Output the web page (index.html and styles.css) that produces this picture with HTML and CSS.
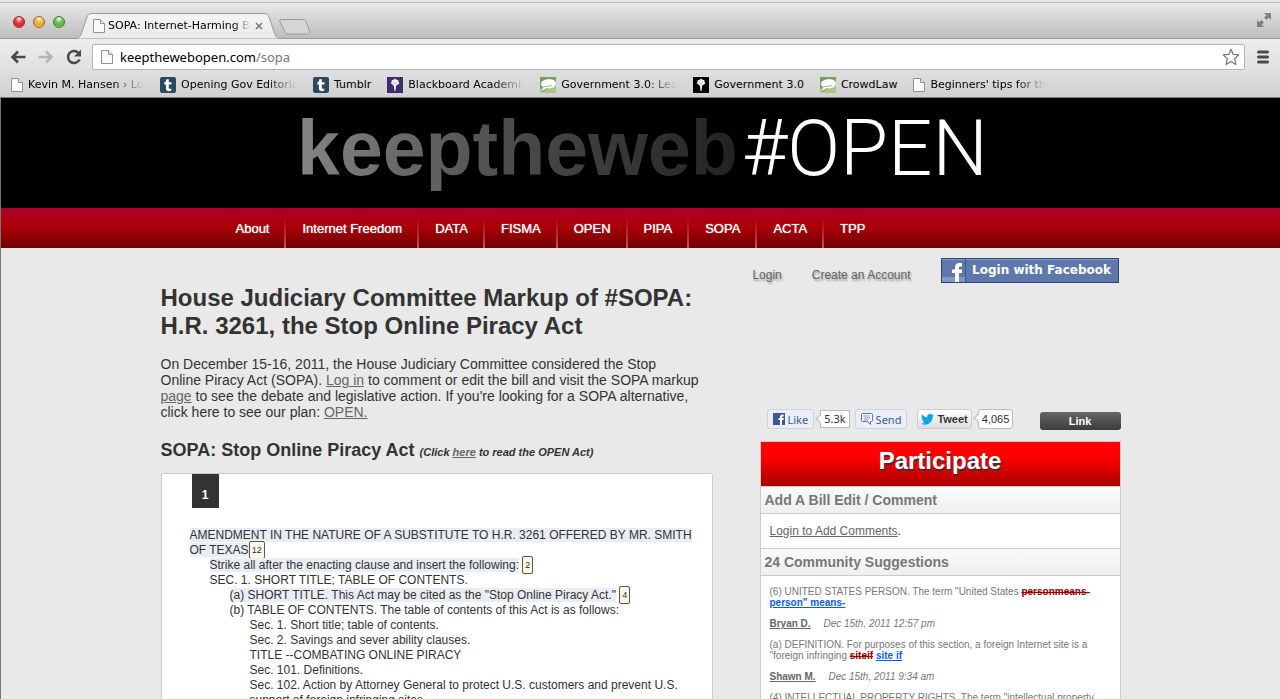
FILE: index.html
```html
<!DOCTYPE html>
<html lang="en">
    <head>
        <meta charset="utf-8">
        <title>SOPA: Internet-Harming Bill</title>
        <link rel="stylesheet" href="styles.css">
    </head>
    <body>
        <svg class="defs" aria-hidden="true">
            <linearGradient id="tab-fill" x1="0" y1="0" x2="0" y2="1">
                <stop offset="0" stop-color="#f4f4f4"/>
                <stop offset="1" stop-color="#ebebeb"/>
            </linearGradient>
            <symbol id="page" viewBox="0 0 12 14">
                <path d="M.5.5h7l4 4v9H.5z" fill="#fafafa" stroke="#929292"/>
                <path d="M7.500.5v4h4" fill="#e6e6e6" stroke="#929292"/>
            </symbol>
            <symbol id="tumblr" viewBox="0 0 16 16">
                <rect width="16" height="16" rx="2" fill="#2c4762"/>
                <path d="M6.300 2.300h2.500v2.900h2.700v2.300H8.800v3.300c0 1.400 1.300 1.200 2.500.6v2.200c-2.500 1.200-5.400.6-5.400-2V7.500H4.300V5.600c1.300-.5 1.900-1.500 2-3.300z" fill="#fff"/>
            </symbol>
            <symbol id="torch" viewBox="0 0 16 16">
                <path d="M6.900 8h2.200l-.6 6h-1z" fill="#fff"/>
                <path d="M8 1.500l1.500 1.200 1.800.2.300 1.900.8 1.600-1.500 1.200-1.300 1L8 8l-1.800.5-1-1.300-1.500-1 .9-1.500.2-1.800 1.800-.2z" fill="#eee"/>
                <path d="M6 5l2 2 2-2" stroke="#999" stroke-width=".6" fill="none"/>
            </symbol>
            <symbol id="crowd" viewBox="0 0 16 16">
                <rect width="16" height="16" fill="#7ba05b"/>
                <path d="M0 12l16-3v7H0z" fill="#a9c98c"/>
                <path d="M9 2.200c4 0 7 1.500 7 4.300s-3 4.800-7 4.800c-1 0-2-.1-3-.4-1 1.600-3 2.600-5 2.500 1.300-.8 1.900-1.900 2-3.300C1.800 9.300 1 8 1 6.800 1 4 5 2.200 9 2.200z" fill="#fff"/>
                <path d="M1.500 13.500c3 .5 5-1 5.500-2M3 10c3-.8 6-1 9-1.200" stroke="#6d924f" stroke-width=".7" fill="none"/>
            </symbol>
        </svg>

        <div class="browser">
            <div class="titlebar">
                <div class="lights">
                    <span class="light red"></span>
                    <span class="light yellow"></span>
                    <span class="light green"></span>
                </div>
                <div class="tab">
                    <svg class="tab-shape" viewBox="0 0 206 26"><path d="M0 25.500c4 0 5-2 6-4L12 4c1-2.500 2-3.500 5-3.500h172c3 0 4 1 5 3.500l6 17.500c1 2 2 4 6 4z" fill="url(#tab-fill)"/><path d="M0 25.500c4 0 5-2 6-4L12 4c1-2.500 2-3.500 5-3.500h172c3 0 4 1 5 3.500l6 17.500c1 2 2 4 6 4" fill="none" stroke="#999"/></svg>
                    <svg class="icon-page"><use href="#page"/></svg>
                    <span class="tab-title fade">SOPA: Internet-Harming Bill</span>
                    <button class="tab-close" aria-label="Close tab"><svg viewBox="0 0 8 8"><path d="M1 1l6 6M7 1L1 7" stroke="#777" stroke-width="1.500"/></svg></button>
                </div>
                <button class="new-tab" aria-label="New tab"><svg viewBox="0 0 34 18"><path d="M4.500 1.500h21c2 0 3 .5 3.700 2l3.300 9.500c.6 2 0 3-2 3h-19c-2 0-3-.7-3.700-2.500L3 4c-.7-1.700-.3-2.500 1.500-2.500z" fill="#d5d5d5" stroke="#999"/></svg></button>
                <button class="fullscreen" aria-label="Full screen"><svg viewBox="0 0 14 14"><path d="M7 0h7v7l-2.300-2.300-2.200 2.200-2.400-2.400 2.200-2.200zM0 14V7l2.300 2.300 2.200-2.200 2.400 2.400-2.200 2.200L7 14z" fill="#808080"/></svg></button>
            </div>

            <div class="toolbar">
                <button aria-label="Back"><svg viewBox="0 0 16 14"><path d="M15.500 7H3M8 1.500L2.500 7 8 12.500" fill="none" stroke="#4a4a4a" stroke-width="2.600"/></svg></button>
                <button aria-label="Forward"><svg viewBox="0 0 16 14"><path d="M.5 7H13M8 1.500L13.500 7 8 12.500" fill="none" stroke="#b5b5b5" stroke-width="2.600"/></svg></button>
                <button aria-label="Reload"><svg class="reload" viewBox="0 0 16 16"><path d="M12.500 4A6 6 0 1 0 13.500 10.500" fill="none" stroke="#4a4a4a" stroke-width="2.500"/><path d="M15 .5v7H8z" fill="#4a4a4a"/></svg></button>
                <div class="omnibox">
                    <svg class="icon-page"><use href="#page"/></svg>
                    <span class="url" role="textbox" aria-label="Address">keepthewebopen.com<span class="path">/sopa</span></span>
                    <button aria-label="Bookmark"><svg class="star" viewBox="0 0 18 18"><path d="M9 1.200l2.200 5.200 5.600.5-4.200 3.800 1.300 5.700L9 13.500l-4.900 2.900 1.300-5.700L1.200 6.900l5.600-.5z" fill="#fff" stroke="#777" stroke-linejoin="round" stroke-width="1.200"/></svg></button>
                </div>
                <button class="menu" aria-label="Menu"><svg viewBox="0 0 12 14"><path d="M1.500 2h9M1.500 7h9M1.500 12h9" stroke="#4a4a4a" stroke-width="3" stroke-linecap="round"/></svg></button>
            </div>

            <nav class="bookmarks" aria-label="Bookmarks">
                <a href="#" class="bookmark"><svg class="icon-page"><use href="#page"/></svg><span class="fade">Kevin M. Hansen › Log In</span></a>
                <a href="#" class="bookmark"><svg class="favicon"><use href="#tumblr"/></svg><span class="fade">Opening Gov Editorial</span></a>
                <a href="#" class="bookmark"><svg class="favicon"><use href="#tumblr"/></svg><span>Tumblr</span></a>
                <a href="#" class="bookmark"><svg class="favicon purple"><use href="#torch"/></svg><span class="fade">Blackboard Academic</span></a>
                <a href="#" class="bookmark"><svg class="favicon"><use href="#crowd"/></svg><span class="fade">Government 3.0: Learn</span></a>
                <a href="#" class="bookmark"><svg class="favicon black"><use href="#torch"/></svg><span>Government 3.0</span></a>
                <a href="#" class="bookmark"><svg class="favicon"><use href="#crowd"/></svg><span>CrowdLaw</span></a>
                <a href="#" class="bookmark"><svg class="icon-page"><use href="#page"/></svg><span class="fade">Beginners' tips for the</span></a>
            </nav>

            <div class="site">
                <header class="banner">
                    <a href="#" class="logo"><span class="logo-web">keeptheweb</span><span class="logo-open">#OPEN</span></a>
                </header>
                <nav class="main-nav">
                    <ul>
                        <li><a href="#">About</a></li>
                        <li><a href="#">Internet Freedom</a></li>
                        <li><a href="#">DATA</a></li>
                        <li><a href="#">FISMA</a></li>
                        <li><a href="#">OPEN</a></li>
                        <li><a href="#">PIPA</a></li>
                        <li><a href="#">SOPA</a></li>
                        <li><a href="#">ACTA</a></li>
                        <li><a href="#">TPP</a></li>
                    </ul>
                </nav>

                <div class="container">
                    <main>
                        <h1>House Judiciary Committee Markup of #SOPA: <br>H.R. 3261, the Stop Online Piracy Act</h1>
                        <p class="intro">On December 15-16, 2011, the House Judiciary Committee considered the Stop <br>Online Piracy Act (SOPA). <a href="#">Log in</a> to comment or edit the bill and visit the SOPA markup <br><a href="#">page</a> to see the debate and legislative action. If you're looking for a SOPA alternative, <br>click here to see our plan: <a href="#">OPEN.</a></p>
                        <h2>SOPA: Stop Online Piracy Act <small>(Click <a href="#">here</a> to read the OPEN Act)</small></h2>

                        <div class="bill">
                            <span class="page-number">1</span>
                            <p><mark>AMENDMENT IN THE NATURE OF A SUBSTITUTE TO H.R. 3261 OFFERED BY MR. SMITH OF TEXAS</mark><a href="#" class="count">12</a></p>
                            <p class="level-1"><mark>Strike all after the enacting clause and insert the following:</mark> <a href="#" class="count">2</a></p>
                            <p class="level-1">SEC. 1. SHORT TITLE; TABLE OF CONTENTS.</p>
                            <p class="level-2"><mark>(a) SHORT TITLE. This Act may be cited as the "Stop Online Piracy Act."</mark> <a href="#" class="count">4</a></p>
                            <p class="level-2">(b) TABLE OF CONTENTS. The table of contents of this Act is as follows:</p>
                            <p class="level-3">Sec. 1. Short title; table of contents.</p>
                            <p class="level-3">Sec. 2. Savings and sever ability clauses.</p>
                            <p class="level-3">TITLE --COMBATING ONLINE PIRACY</p>
                            <p class="level-3">Sec. 101. Definitions.</p>
                            <p class="level-3">Sec. 102. Action by Attorney General to protect U.S. customers and prevent U.S. support of foreign infringing sites.</p>
                        </div>
                    </main>

                    <aside>
                        <div class="account">
                            <a href="#">Login</a>
                            <a href="#">Create an Account</a>
                            <button class="fb-login">
                                <svg viewBox="0 0 23 23"><rect y="18" width="23" height="5" fill="#8396c0"/><path d="M13 23v-9h-3v-3.500h3V8.500C13 5.500 14.500 4 17.300 4H20v3.500h-1.700c-1 0-1.300.4-1.300 1.300v1.700h3V14h-3v9z" fill="#fff"/></svg>
                                <span>Login with Facebook</span>
                            </button>
                        </div>

                        <div class="social">
                            <button class="fb-button"><svg viewBox="0 0 12 12"><rect width="12" height="12" fill="#3b5998"/><path d="M7 12V7H5.500V5H7V4c0-1.600.8-2.500 2.300-2.500h1.400v2H9.700c-.5 0-.7.2-.7.700V5h1.700v2H9v5z" fill="#fff"/></svg>Like</button>
                            <span class="bubble fb-count">5.3k</span>
                            <button class="fb-button"><svg viewBox="0 0 12 12"><path d="M.5 1.500q0-1 1-1h9q1 0 1 1v6q0 1-1 1h-1v3l-3-3h-5q-1 0-1-1z" fill="#fff" stroke="#5b73ad"/><path d="M2.500 3h7M2.500 5h7M2.500 7h5" stroke="#5b73ad" stroke-width=".8"/></svg>Send</button>
                            <button class="tweet"><svg viewBox="0 0 13 11"><path d="M13 1.500l-1.300 1.300C11.700 7 8.500 10.700 4.200 10.700 2.700 10.700 1.200 10.300 0 9.500c1.500.1 2.700-.3 3.800-1.100C2.600 8.300 1.800 7.600 1.500 6.500h1.100C1.300 6 .6 5 .6 3.800l1.100.3C.6 3.200.3 1.900 1 .6c1.400 1.600 3.200 2.500 5.300 2.700C6 1.500 7.200 0 9 0c.8 0 1.400.3 1.900.8l1.600-.6-1 1.400z" fill="#0aa5e8"/></svg>Tweet</button>
                            <span class="bubble tw-count">4,065</span>
                            <button class="link-button">Link</button>
                        </div>

                        <section class="panel">
                            <h2>Participate</h2>
                            <h3>Add A Bill Edit / Comment</h3>
                            <p class="login-note"><a href="#">Login to Add Comments</a>.</p>
                            <h3>24 Community Suggestions</h3>
                            <div class="suggestions">
                                <p>(6) UNITED STATES PERSON. The term "United States <del>personmeans-</del> <ins>person" means-</ins></p>
                                <p class="author"><a href="#">Bryan D.</a> <time>Dec 15th, 2011 12:57 pm</time></p>
                                <p>(a) DEFINITION. For purposes of this section, a foreign Internet site is a "foreign infringing <del>siteif</del> <ins>site if</ins></p>
                                <p class="author"><a href="#">Shawn M.</a> <time>Dec 15th, 2011 9:34 am</time></p>
                                <p>(4) INTELLECTUAL PROPERTY RIGHTS. The term "intellectual property</p>
                            </div>
                        </section>
                    </aside>
                </div>
            </div>
        </div>
    </body>
</html>
```

FILE: styles.css
```css
* {
  box-sizing: border-box;
}

body {
  margin: 0;
  font-family: Arial, "Liberation Sans", sans-serif;
  color: #333;
}

h1, h2, h3, p, ul {
  margin: 0;
  padding: 0;
}

button {
  margin: 0;
  padding: 0;
  border: none;
  background: none;
  cursor: pointer;
}

svg {
  display: block;
  flex: none;
}

a {
  color: #666;
}

.defs {
  position: absolute;
  width: 0;
  height: 0;
}

/* browser window */
.browser {
  display: flex;
  flex-direction: column;
  height: 100vh;
  overflow: hidden;
  background: #dedede;
  font-family: "DejaVu Sans", sans-serif;
}

.titlebar {
  display: flex;
  align-items: flex-end;
  height: 39px;
  flex: none;
  padding-right: 9px;
  background: linear-gradient(#e8e8e8 2px, #b5b5b5 2px, #b5b5b5 3px, #e9e9e9 3px, #bdbdbd);
  border-bottom: 1px solid #999;
}

.lights {
  display: flex;
  gap: 8px;
  padding: 0 10px 10px 13px;
}

.light {
  width: 12px;
  height: 12px;
  border-radius: 50%;
  border: 1px solid #555;
}

.red {
  background: radial-gradient(circle at 50% 20%, #fff, #f04848 35%, #d8232c 70%, #ff8d8d);
  border-color: #8d2b2b;
}

.yellow {
  background: radial-gradient(circle at 50% 20%, #fff, #f6b840 35%, #eea52c 70%, #ffe680);
  border-color: #96692a;
}

.green {
  background: radial-gradient(circle at 50% 20%, #fff, #76c862 35%, #58b046 70%, #bdf593);
  border-color: #44752f;
}

.tab {
  position: relative;
  display: flex;
  align-items: center;
  width: 206px;
  height: 26px;
  padding: 0 18px;
  margin-bottom: -1px;
}

.tab-shape {
  position: absolute;
  top: 0;
  left: 0;
  width: 206px;
  height: 26px;
}

.tab .icon-page {
  position: relative;
}

.icon-page {
  width: 12px;
  height: 14px;
}

.fade {
  overflow: hidden;
  white-space: nowrap;
  mask-image: linear-gradient(90deg, #000 calc(100% - 30px), transparent);
}

.tab-title {
  position: relative;
  flex: 1;
  margin: 0 5px 0 3px;
  font-size: 11px;
  line-height: 16px;
  color: #000;
  mask-image: linear-gradient(90deg, #000 calc(100% - 16px), transparent);
}

.tab-close {
  position: relative;
}

.tab-close svg {
  width: 8px;
  height: 8px;
}

.new-tab {
  margin: 0 0 2px -4px;
}

.new-tab svg {
  width: 34px;
  height: 18px;
}

.fullscreen {
  margin: 0 0 11px auto;
}

.fullscreen svg {
  width: 14px;
  height: 14px;
}

.toolbar {
  display: flex;
  align-items: center;
  gap: 12px;
  height: 33px;
  flex: none;
  padding: 2px 11px 0 10px;
  background: linear-gradient(#ededed, #dfdfdf);
}

.toolbar > button svg {
  width: 16px;
  height: 14px;
}

.toolbar > button .reload {
  height: 16px;
}

.toolbar > .menu svg {
  width: 12px;
  height: 14px;
}

.omnibox {
  display: flex;
  align-items: center;
  flex: 1;
  height: 26px;
  padding: 0 4px 0 8px;
  margin-left: -2px;
  background: #fff;
  border: 1px solid #b3b3b3;
  border-radius: 2px;
}

.url {
  flex: 1;
  margin-left: 7px;
  font-family: "Noto Sans", sans-serif;
  font-size: 13px;
  color: #000;
}

.path {
  color: #777;
}

.star {
  width: 18px;
  height: 18px;
}

.bookmarks {
  display: flex;
  align-items: center;
  gap: 16px;
  height: 26px;
  flex: none;
  padding: 0 11px;
  background: linear-gradient(#dedede, #d0d0d0);
  border-bottom: 1px solid #777;
}

.bookmark {
  display: flex;
  align-items: center;
  gap: 5px;
  font-size: 11px;
  line-height: 16px;
  color: #000;
  text-decoration: none;
  white-space: nowrap;
}

.bookmark .fade {
  width: 116px;
}

.favicon {
  width: 16px;
  height: 16px;
}

.purple {
  background: #432a6c;
}

.black {
  background: #000;
}

/* website */
.site {
  flex: 1;
  min-height: 0;
  overflow: hidden;
  background: #e9e9e9;
  border-left: 1px solid #777;
  font-family: Arial, "Liberation Sans", sans-serif;
}

.banner {
  display: flex;
  justify-content: center;
  height: 110px;
  background: #000;
}

.logo {
  display: flex;
  align-items: baseline;
  gap: 4px;
  padding-left: 4px;
  font-size: 77px;
  line-height: 100px;
  text-decoration: none;
}

.logo-web {
  font-weight: bold;
  color: transparent;
  background: linear-gradient(90deg, #858585, #4a4a4a 50%, #222);
  background-clip: text;
}

.logo-open {
  font-family: Roboto, sans-serif;
  font-size: 78px;
  font-weight: 300;
  color: #fff;
}

.main-nav {
  background: linear-gradient(#ad0028, #ad0007 45%, #700000);
}

.main-nav ul {
  display: flex;
  max-width: 960px;
  margin: 0 auto;
  padding-left: 59px;
  list-style: none;
}

.main-nav li {
  padding: 0 15px 0 16px;
  border-right: 2px solid;
  border-image: linear-gradient(transparent 25%, #b86060) 1;
}

.main-nav li:last-child {
  border: none;
}

.main-nav a {
  font-size: 13px;
  line-height: 40px;
  display: block;
  height: 40px;
  padding-top: 1px;
  color: #fff;
  text-decoration: none;
  text-shadow: 0 0 1px #fff;
}

.container {
  display: grid;
  grid-template-columns: minmax(0, 552fr) minmax(0, 361fr);
  gap: 47px;
  max-width: 960px;
  margin: 0 auto;
}

h1 {
  margin-top: 36px;
  font-size: 24px;
  line-height: 28px;
}

.intro {
  margin-top: 16px;
  font-size: 14px;
  line-height: 16px;
}

main h2 {
  margin: 18px 0 9px;
  font-size: 18px;
  line-height: 24px;
}

main h2 small {
  font-size: 11px;
  font-style: italic;
}

.bill {
  padding: 0 12px 20px 28px;
  background: #fff;
  border: 1px solid #ccc;
  border-radius: 2px;
  font-size: 12px;
  line-height: 15px;
}

.page-number {
  display: block;
  width: 27px;
  height: 34px;
  padding-top: 14px;
  margin: 0 0 20px 2px;
  background: #333;
  color: #fff;
  font-weight: bold;
  text-align: center;
}

mark {
  background: #e9edf4;
  color: inherit;
}

.level-1 {
  padding-left: 20px;
}

.level-2 {
  padding-left: 40px;
}

.level-3 {
  padding-left: 60px;
}

.count {
  padding: 3px 2px;
  background: #fdf9ea;
  border: 1px solid #5b5843;
  border-radius: 2px;
  font-size: 9px;
  line-height: 9px;
  vertical-align: 1px;
  color: #333;
  text-decoration: none;
}

.account {
  display: flex;
  justify-content: flex-end;
  align-items: center;
  gap: 30px;
  padding: 10px 2px 0 0;
  font-size: 12px;
  white-space: nowrap;
}

.account a {
  padding-top: 8px;
  text-decoration: none;
  text-shadow: 1px 2px 2px #999;
}

.fb-login {
  display: flex;
  width: 178px;
  height: 25px;
  flex: none;
  background: #5f78ab;
  border: 1px solid #29447e;
  box-shadow: inset 0 1px 0 #879ac0;
  color: #fff;
  font-family: "DejaVu Sans", sans-serif;
  font-size: 12px;
  font-weight: bold;
  line-height: 23px;
}

.fb-login svg {
  width: 24px;
  height: 23px;
  border-right: 1px solid #3e5a94;
}

.fb-login span {
  flex: 1;
}

.social {
  display: flex;
  align-items: center;
  margin-top: 125px;
  padding-left: 7px;
  font-size: 11px;
}

.fb-button,
.tweet {
  display: flex;
  align-items: center;
  gap: 3px;
  height: 20px;
  padding: 0 5px;
  border: 1px solid #cad4e7;
  border-radius: 3px;
  background: #eceef5;
  color: #3b5998;
  font-family: "Noto Sans", sans-serif;
  font-size: 11px;
}

.fb-button svg {
  width: 12px;
  height: 12px;
}

.tweet {
  margin-left: 10px;
  padding: 0 3px;
  border-color: #ccc;
  background: linear-gradient(#fff, #dedede);
  color: #333;
  font-family: Arial, "Liberation Sans", sans-serif;
  font-weight: bold;
}

.tweet svg {
  width: 13px;
  height: 11px;
}

.bubble {
  position: relative;
  padding: 0 3px;
  margin-left: 6px;
  background: #fff;
  border: 1px solid #bbb;
  line-height: 16px;
  color: #333;
}

/* little arrow pointing at the button */
.bubble::before {
  content: "";
  position: absolute;
  left: -4px;
  top: 5px;
  width: 5px;
  height: 5px;
  background: #fff;
  border: 1px solid #bbb;
  border-width: 0 0 1px 1px;
  transform: rotate(45deg);
}

.fb-count {
  margin-right: 5px;
  font-family: "Noto Sans", sans-serif;
}

.tw-count {
  border-radius: 3px;
  line-height: 18px;
}

.link-button {
  width: 81px;
  height: 18px;
  margin: 4px 0 0 auto;
  border-radius: 3px;
  background: linear-gradient(#666, #3c3c3c);
  color: #fff;
  font-family: Arial, "Liberation Sans", sans-serif;
  font-size: 11px;
  font-weight: bold;
}

.panel {
  margin-top: 11px;
  background: #fff;
  border: 1px solid #ccc;
}

.panel h2 {
  height: 44px;
  background: linear-gradient(#f00 35%, #a80000);
  color: #fff;
  font-size: 24px;
  line-height: 38px;
  text-align: center;
  text-shadow: 1px 2px 1px #333;
}

.panel h3 {
  padding: 0 4px;
  background: linear-gradient(#fafafa, #efefef);
  border: 1px solid #ccc;
  border-width: 1px 0;
  color: #777;
  font-size: 14px;
  line-height: 26px;
}

.login-note {
  padding: 0 9px;
  font-size: 12px;
  line-height: 34px;
}

.suggestions {
  padding: 10px 9px;
  font-size: 10px;
  line-height: 11px;
  color: #777;
}

.suggestions p {
  margin-bottom: 10px;
}

.author a {
  font-weight: bold;
}

time {
  margin-left: 10px;
  font-style: italic;
}

del {
  color: #900;
  font-weight: bold;
}

ins {
  color: #0b5cff;
  font-weight: bold;
}
```
